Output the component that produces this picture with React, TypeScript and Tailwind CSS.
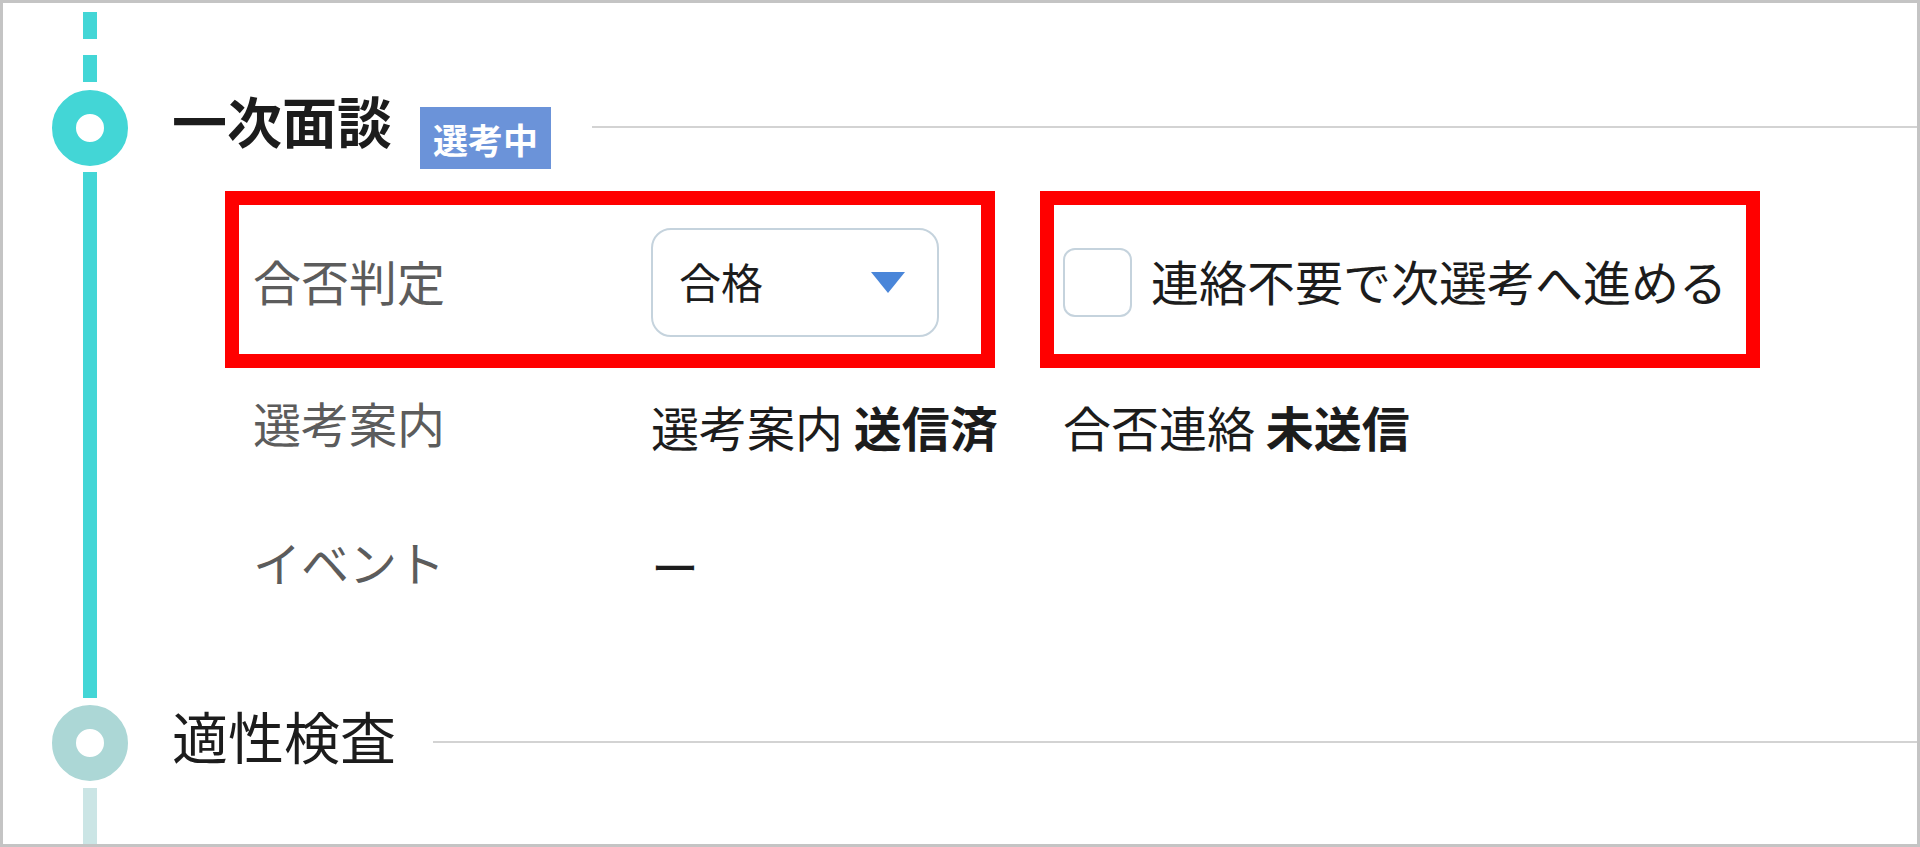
import React from 'react';

const TEAL = 'bg-[#43d6d6]';

const Stage = ({ title, active, badge }: { title: string; active: boolean; badge?: string }) => (
  <div className="flex items-start h-[76px]">
    <div
      className={`w-[76px] h-[76px] rounded-full border-[24px] shrink-0 ${
        active ? 'border-[#43d6d6]' : 'border-[#acd7d6]'
      }`}
    />
    <h2
      className={`ml-[44px] mt-[2px] leading-none text-[#1c1c1c] whitespace-nowrap ${
        active ? 'text-[55px] font-bold' : 'text-[56px] font-normal'
      }`}
    >
      {title}
    </h2>
    {badge && (
      <div className="ml-[28px] mt-[17px] w-[131px] h-[62px] bg-[#6b93d9] flex items-center justify-center shrink-0">
        <span className="text-[35px] leading-none font-bold text-white">{badge}</span>
      </div>
    )}
    <div className={`flex-1 mt-[36px] h-[2px] bg-[#d3d3d3] ${badge ? 'ml-[41px]' : 'ml-[37px]'}`} />
  </div>
);

const App = () => {
  return (
    <div className="w-[1920px] h-[847px] border-[3px] border-[#c4c4c4] bg-white overflow-hidden flex flex-col pl-[49px] font-['Noto_Sans_CJK_JP','Noto_Sans',sans-serif]">
      {/* dashed lead-in */}
      <div className="w-[76px] h-[87px] flex flex-col items-center pt-[9px] gap-[16px] shrink-0">
        <div className={`w-[14px] h-[27px] ${TEAL}`} />
        <div className={`w-[14px] h-[27px] ${TEAL}`} />
      </div>

      <Stage title="一次面談" active badge="選考中" />

      {/* stage body */}
      <div className="flex h-[539px] shrink-0">
        <div className="w-[76px] flex justify-center pt-[6px] pb-[7px] shrink-0">
          <div className={`w-[14px] ${TEAL}`} />
        </div>

        <div className="pl-[97px] pt-[25px] flex flex-col">
          {/* highlighted row */}
          <div className="flex gap-[45px]">
            <div className="w-[770px] h-[177px] border-[14px] border-[#ff0000] flex items-center pl-[14px]">
              <span className="w-[398px] shrink-0 text-[48px] leading-none text-[#5c5c5c]">合否判定</span>
              <div className="w-[288px] h-[109px] mt-[6px] border-2 border-[#c5d3dd] rounded-[20px] flex items-center justify-between pl-[26px] pr-[32px]">
                <span className="-mt-[4px] text-[42px] leading-none text-[#1c1c1c]">合格</span>
                <svg width="34" height="21" viewBox="0 0 34 21">
                  <polygon points="0,0 34,0 17,21" fill="#4a86d9" />
                </svg>
              </div>
            </div>
            <div className="w-[720px] h-[177px] border-[14px] border-[#ff0000] flex items-center pl-[9px]">
              <div className="w-[69px] h-[69px] mt-[6px] border-2 border-[#c5d3dd] rounded-[12px] shrink-0" />
              <span className="ml-[19px] text-[48px] leading-none text-[#1c1c1c] whitespace-nowrap">
                連絡不要で次選考へ進める
              </span>
            </div>
          </div>

          <div className="flex items-start pl-[28px] mt-[30px]">
            <span className="w-[398px] shrink-0 text-[48px] leading-none text-[#5c5c5c]">選考案内</span>
            <span className="w-[412px] shrink-0 mt-[4px] text-[48px] leading-none text-[#1c1c1c] whitespace-nowrap">
              選考案内 <b className="font-bold">送信済</b>
            </span>
            <span className="mt-[4px] text-[48px] leading-none text-[#1c1c1c] whitespace-nowrap">
              合否連絡 <b className="font-bold">未送信</b>
            </span>
          </div>

          <div className="flex items-start pl-[28px] mt-[87px]">
            <span className="w-[398px] shrink-0 text-[48px] leading-none text-[#5c5c5c]">イベント</span>
            <span className="mt-[4px] text-[48px] leading-none text-[#1c1c1c]">ー</span>
          </div>
        </div>
      </div>

      <Stage title="適性検査" active={false} />

      {/* tail */}
      <div className="w-[76px] flex-1 flex justify-center pt-[7px]">
        <div className="w-[14px] bg-[#cbe5e5]" />
      </div>
    </div>
  );
};

export default App;
